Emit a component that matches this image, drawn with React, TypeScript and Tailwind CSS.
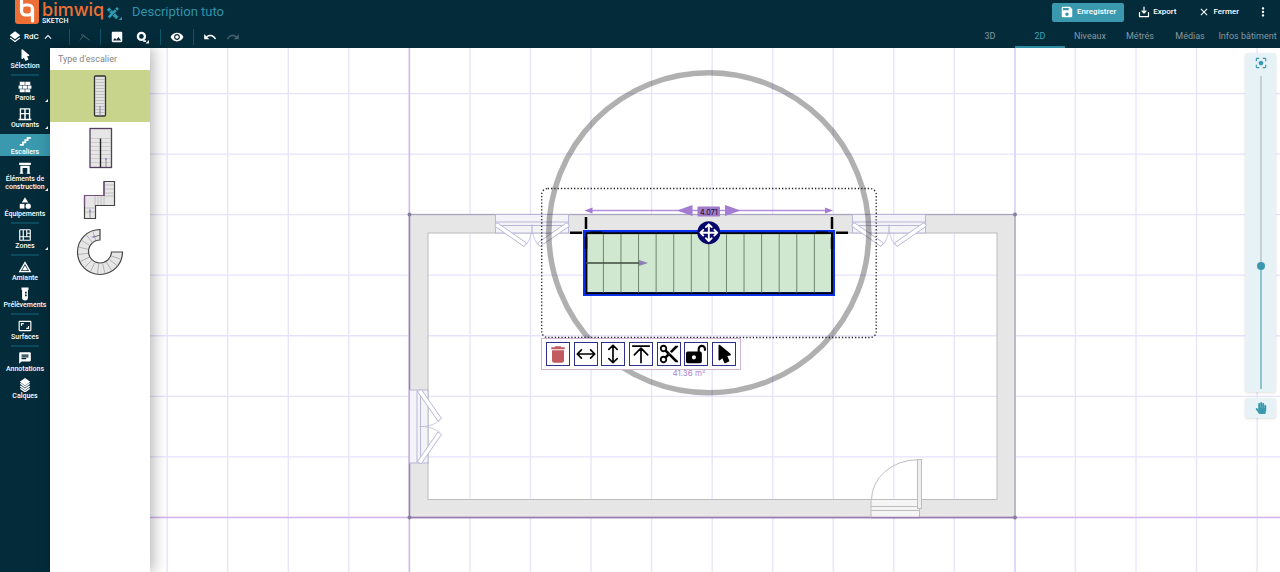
import type { ReactNode } from "react";
import {
  MdAspectRatio,
  MdCategory,
  MdCenterFocusStrong,
  MdChat,
  MdClose,
  MdContentCut,
  MdImage,
  MdKeyboardArrowUp,
  MdLayers,
  MdMoreVert,
  MdRedo,
  MdSave,
  MdUndo,
  MdVisibility,
} from "react-icons/md";
import { FaHandPaper } from "react-icons/fa";

const CURSOR =
  "M13.64,21.97C13.14,22.21 12.54,22 12.31,21.5L10.13,16.76L7.62,18.78C7.45,18.92 7.24,19 7,19A1,1 0 0,1 6,18V3A1,1 0 0,1 7,2C7.24,2 7.47,2.09 7.64,2.23L7.65,2.22L19.14,11.86C19.57,12.22 19.62,12.85 19.27,13.27C19.12,13.45 18.91,13.57 18.7,13.61L15.54,14.23L17.74,18.96C18,19.46 17.76,20.05 17.26,20.28L13.64,21.97Z";

function Glyph({ d, className = "size-3.5" }: { d: string; className?: string }) {
  return (
    <svg viewBox="0 0 24 24" className={className} fill="currentColor" fillRule="evenodd" aria-hidden="true">
      <path d={d} />
    </svg>
  );
}

function LineGlyph({ d, className = "size-5", width = 2 }: { d: string; className?: string; width?: number }) {
  return (
    <svg
      viewBox="0 0 24 24"
      className={className}
      fill="none"
      stroke="currentColor"
      strokeWidth={width}
      strokeLinecap="round"
      strokeLinejoin="round"
      aria-hidden="true"
    >
      <path d={d} />
    </svg>
  );
}

type Tool = { label: string; icon: ReactNode; menu?: boolean; active?: boolean };

const toolGroups: Tool[][] = [
  [{ label: "Sélection", icon: <Glyph d={CURSOR} /> }],
  [
    {
      label: "Parois",
      menu: true,
      icon: (
        <Glyph d="M3 3h8.500v5.500H3zM12.500 3H21v5.500h-8.500zM1 9.300h6.500v5.500H1zM8.300 9.300h7.500v5.500h-7.500zM16.700 9.300h6.300v5.500h-6.300zM3 15.700h8.500V21H3zM12.500 15.700H21V21h-8.500z" />
      ),
    },
    {
      label: "Ouvrants",
      menu: true,
      icon: <Glyph d="M3 2h18v18h2v2.500H1V20h2zM5.300 4.300v6h5.400v-6zM13.300 4.300v6h5.400v-6zM5.300 12.500V20h5.400v-7.500zM13.300 12.500V20h5.400v-7.500z" />,
    },
    {
      label: "Escaliers",
      active: true,
      icon: <Glyph d="M15,5V9H11V13H7V17H3V20H10V16H14V12H18V8H22V5H15Z" />,
    },
    {
      label: "Éléments de construction",
      menu: true,
      icon: <Glyph d="M2 3h20v4H2zM4 8h16v12h1v2h-6v-2h1v-8H8v8h1v2H3v-2h1z" />,
    },
    { label: "Équipements", icon: <MdCategory className="size-3.5" /> },
  ],
  [
    {
      label: "Zones",
      menu: true,
      icon: (
        <Glyph d="M4 2h16a2 2 0 0 1 2 2v16a2 2 0 0 1-2 2H4a2 2 0 0 1-2-2V4a2 2 0 0 1 2-2zM4 4v10h4V4zM10 4v10h4V4zM16 4v4h4V4zM16 10v4h4v-4zM4 16v4h4v-4zM10 16v4h10v-4z" />
      ),
    },
  ],
  [
    {
      label: "Amiante",
      icon: <Glyph d="M12 2L23 21H1zM12 7L5 19h14zM12 9.500l5 8H7z" />,
    },
    {
      label: "Prélèvements",
      icon: <Glyph d="M6 1h12v4h-1v14a5 4 0 0 1-10 0V5H6zM12 8v3h3V8zM12 13v3h3v-3z" />,
    },
  ],
  [{ label: "Surfaces", icon: <MdAspectRatio className="size-3.5" /> }],
  [
    { label: "Annotations", icon: <MdChat className="size-3.5" /> },
    {
      label: "Calques",
      icon: (
        <Glyph d="M12 0l9 6.500-9 6.500-9-6.500zM3 10l2-1.500 7 5 7-5 2 1.500-9 6.500zM3 14.500L5 13l7 5 7-5 2 1.500-9 6.500zM3 18.500L5 17l7 5 7-5 2 1.500L12 25z" />
      ),
    },
  ],
];

function Separator() {
  return <span className="h-4 w-px shrink-0 bg-[#0d5569]" />;
}

function TopBar() {
  const icon = "size-3.5";
  return (
    <header className="flex h-12 shrink-0 justify-between bg-[#042b3a] text-white">
      <div className="flex flex-col">
        <div className="flex h-6 items-center">
          <svg viewBox="0 0 24 24" className="ml-[15px] size-6 shrink-0" aria-hidden="true">
            <rect y="-3" width="24" height="27" rx="3" fill="#ee6f35" />
            <path d="M6.500 0V10" stroke="#fff" strokeWidth="3.200" />
            <rect x="6.500" y="5" width="11" height="10" rx="4" fill="none" stroke="#fff" strokeWidth="3.200" />
            <path d="M17.500 9V21" stroke="#fff" strokeWidth="3.200" strokeLinecap="round" />
          </svg>
          <div className="ml-[3px] flex w-[62px] flex-col">
            <span className="h-[17px] font-[Inter] text-[18px] leading-5 font-medium text-[#ee6f35]">bimwiq</span>
            <span className="h-[7px] text-[7px] leading-[8px] font-medium">SKETCH</span>
          </div>
          <button aria-label="Modifier" className="ml-0.5 text-[#2e9ab1]">
            <svg viewBox="0 0 24 24" className="size-4" fill="none" stroke="currentColor" aria-hidden="true">
              <path d="M3 7l14 14" strokeWidth="5" />
              <path d="M18 6L4 20" strokeWidth="4" />
              <path d="M13 7l4 4M5 12l3-3M10 17l3-3" stroke="#042b3a" strokeWidth="1.500" />
              <path d="M24 19v5h-5z" fill="currentColor" stroke="none" />
            </svg>
          </button>
          <h1 className="ml-2.5 text-[13px] leading-4 font-normal text-[#2e93aa]">Description tuto</h1>
        </div>
        <div className="flex h-6 items-center pt-0.5 pl-2">
          <button className="flex items-center text-[8px] font-medium">
            <MdLayers className={icon} />
            <span className="mx-0.5">RdC</span>
            <MdKeyboardArrowUp className={icon} />
          </button>
          <div className="flex items-center gap-[9px] pl-3.5">
            <Separator />
            <button aria-label="Polyligne" className="text-[#47616d]">
              <LineGlyph d="M2 18l7-9 5 4 7 5M5 8h4l3 5" className="size-3" />
            </button>
            <Separator />
            <button aria-label="Image">
              <MdImage className={icon} />
            </button>
            <button aria-label="Recherche" className="px-0.5">
              <svg viewBox="0 0 24 24" className={icon} fill="none" stroke="currentColor" aria-hidden="true">
                <circle cx="11" cy="11" r="6" strokeWidth="4" />
                <path d="M14 19h5" strokeWidth="3" />
                <path d="M24 17v6h-6z" fill="currentColor" stroke="none" />
              </svg>
            </button>
            <Separator />
            <button aria-label="Affichage">
              <MdVisibility className={icon} />
            </button>
            <Separator />
            <button aria-label="Annuler">
              <MdUndo className={icon} />
            </button>
            <button aria-label="Rétablir" className="text-[#47616d]">
              <MdRedo className={icon} />
            </button>
          </div>
        </div>
      </div>

      <div className="flex flex-col items-end">
        <div className="flex h-6 items-center text-[8px] font-medium">
          <button className="flex h-[19px] w-[72px] items-center justify-center gap-[3px] rounded-xs bg-[#3a99af]">
            <MdSave className={icon} />
            Enregistrer
          </button>
          <button className="ml-3.5 flex items-center gap-[3px]">
            <LineGlyph d="M12 2v12M8 10l4 4 4-4M3 13v8h18v-8" className="size-3" width={2.5} />
            Export
          </button>
          <button className="ml-[22px] flex items-center gap-[3px]">
            <MdClose className="size-3" />
            Fermer
          </button>
          <button aria-label="Plus" className="mr-2.5 ml-[17px]">
            <MdMoreVert className={icon} />
          </button>
        </div>
        <nav className="flex h-6 text-[9px] text-[#8499a2]">
          {["3D", "2D", "Niveaux", "Métrés", "Médias"].map((tab) => (
            <a
              key={tab}
              href={`#${tab}`}
              className={
                tab === "2D"
                  ? "flex w-[50px] items-center justify-center border-b-2 border-[#2e8ba1] pt-[3px] text-[#3aa3ba]"
                  : "flex w-[50px] items-center justify-center border-b-2 border-transparent pt-[3px]"
              }
            >
              {tab}
            </a>
          ))}
          <a
            href="#infos"
            className="flex w-[65px] items-center justify-center border-b-2 border-transparent pt-[3px] whitespace-nowrap"
          >
            Infos bâtiment
          </a>
        </nav>
      </div>
    </header>
  );
}

function Sidebar() {
  return (
    <nav className="flex w-[50px] shrink-0 flex-col bg-[#042b3a] text-white">
      {toolGroups.map((group, index) => (
        <div key={group[0].label} className="flex flex-col">
          {index > 0 && <hr className="mx-[11px] my-1 h-0.5 border-0 bg-[#0b4a5c]" />}
          <div className="flex flex-col gap-[5px]">
            {group.map((tool) => (
              <button
                key={tool.label}
                className={
                  tool.active
                    ? "relative flex flex-col items-center bg-[#3a99af] text-[7px] leading-2 font-medium"
                    : "relative flex flex-col items-center text-[7px] leading-2 font-medium"
                }
              >
                {tool.icon}
                {tool.label}
                {tool.menu && (
                  <svg viewBox="0 0 4 4" className="absolute right-0.5 bottom-0 size-[3px]" fill="currentColor" aria-hidden="true">
                    <path d="M4 0v4H0z" />
                  </svg>
                )}
              </button>
            ))}
          </div>
        </div>
      ))}
    </nav>
  );
}

const spiralTreads = Array.from({ length: 13 }, (_, i) => {
  const a = ((i + 1) * 270 * Math.PI) / (14 * 180);
  return { x: -Math.sin(a), y: -Math.cos(a) };
});

const stairTypes = [
  {
    name: "Escalier droit",
    drawing: (
      <>
        <rect x="19.500" y="6" width="11" height="40" rx="1" fill="#e3e3e3" stroke="#333" strokeWidth="1.300" />
        <path d="M20 9.500h10m-10 3h10m-10 3h10m-10 3h10m-10 3h10m-10 3h10m-10 3h10m-10 3h10m-10 3h10m-10 3h10m-10 3h10m-10 3h10" stroke="#b5b5b5" strokeWidth=".8" />
        <path d="M25 46V36" stroke="#8e80a8" />
      </>
    ),
  },
  {
    name: "Escalier en U",
    drawing: (
      <>
        <rect x="14.500" y="6.500" width="21.500" height="39" transform="translate(.5 0)" fill="#e6e6e6" stroke="#54405c" strokeWidth="1.300" />
        <path d="M16 16.500h20M16 20.500h20m-20 4h20m-20 4h20m-20 4h20m-20 4h20m-20 4h20" stroke="#c4c4c4" strokeWidth=".8" />
        <path d="M25.500 16.500V45.500" stroke="#222" strokeWidth="1.400" />
        <path d="M31 45V36" stroke="#777" strokeWidth=".8" />
        <path d="M31 35l-1 3h2z" fill="#a080d0" />
      </>
    ),
  },
  {
    name: "Escalier en Z",
    drawing: (
      <>
        <path d="M9.500 21.500H29v-14h10.500v24h-19v13h-11z" transform="translate(25 0) translate(-25 0)" fill="#e6e6e6" stroke="#444" strokeWidth="1.200" />
        <path d="M9.500 32V21.500H29v-14" fill="none" stroke="#765080" strokeWidth="1.200" />
        <path d="M30 11h9m-9 4h9m-9 4h9m-9 3h9M29 22v9m-3-9v9m-3-9v9m-3-9v9M10 34h10m-10 4h10" stroke="#b5b5b5" strokeWidth=".8" />
        <path d="M15 44v-8" stroke="#777" strokeWidth=".8" />
        <path d="M15 34.500l-1.200 3h2.400z" fill="#a080d0" />
      </>
    ),
  },
  {
    name: "Escalier circulaire",
    drawing: (
      <>
        <path d="M25 3.500A22.500 22.500 0 1 0 47.500 26H36.500A11.500 11.500 0 1 1 25 14z" fill="#e6e6e6" stroke="#444" strokeWidth="1.200" />
        {spiralTreads.map((t, i) => (
          <path
            key={i}
            d={`M${25 + t.x * 12} ${26 + t.y * 12}L${25 + t.x * 22} ${26 + t.y * 22}`}
            stroke="#999"
            strokeWidth=".7"
          />
        ))}
        <path d="M25 9l-6 2" stroke="#555" strokeWidth=".8" />
        <path d="M16 11l3.500-1.500v2.500z" fill="#a080d0" />
      </>
    ),
  },
];

function StairPanel() {
  return (
    <aside className="z-10 flex w-[100px] shrink-0 flex-col bg-white shadow-[3px_0_14px_rgba(0,0,0,0.3)]">
      <h2 className="h-[22px] pl-2 text-[9px] leading-[22px] font-normal text-[#858585]">Type d'escalier</h2>
      {stairTypes.map((type, index) => (
        <button
          key={type.name}
          aria-label={type.name}
          className={index === 0 ? "flex h-[52px] items-center justify-center bg-[#c8d38b]" : "flex h-[52px] items-center justify-center"}
        >
          <svg viewBox="0 0 50 52" className="h-[52px] w-[50px]" fill="none" aria-hidden="true">
            {type.drawing}
          </svg>
        </button>
      ))}
    </aside>
  );
}

/* Double-leaf window, drawn from its top-left corner with the outer wall face on top. */
function WindowSymbol({ transform }: { transform: string }) {
  return (
    <g transform={transform} stroke="#b9b7d8" fill="none">
      <rect width="73" height="18.500" fill="#f4f4f8" />
      <path d="M0 7.500H73M0 11H73" />
      <path d="M1.500 8L31 28.500L28.500 32L-1 11.500z" fill="#fff" />
      <path d="M71.500 8L42 28.500L44.500 32L74 11.500z" fill="#fff" />
      <path d="M36.500 10Q37 21 31 30M36.500 10Q36 21 42 30" strokeWidth=".7" />
    </g>
  );
}

const STEP = 60.55;
const columns = Array.from({ length: 40 }, (_, i) => 409.4 + (i - 6) * STEP);
const rows = Array.from({ length: 24 }, (_, i) => 517.4 + (i - 8) * STEP);
const treads = Array.from({ length: 13 }, (_, i) => 603.4 + i * 17.58);

function Plan() {
  return (
    <svg className="absolute inset-0 size-full" aria-label="Plan 2D">
      <g transform="translate(-50 -48)" fill="none">
        <g stroke="#e5e3fc" strokeWidth="1.300">
          {columns.map((x) => (
            <path key={x} d={`M${x} 0V1600`} />
          ))}
          {rows.map((y) => (
            <path key={y} d={`M0 ${y}H2400`} />
          ))}
        </g>
        <path d="M1015 0V1600" stroke="#dcdafc" strokeWidth="2" />
        <path d="M409.400 0V1600M0 517.400H2400" stroke="#d3b5f0" strokeWidth="1.500" />

        <path d="M409.500 214.500H1015V517.500H409.500zM428 233V499.500H997V233z" fill="#e6e6e6" fillRule="evenodd" />
        <rect x="428" y="233" width="569" height="266.500" stroke="#bcbcbc" />
        <rect x="409.500" y="214.500" width="605.500" height="303" stroke="#a9a4bf" strokeWidth="1.300" />
        <path d="M409.500 214.500V517.500H1015" stroke="#987cae" strokeWidth="1.300" />
        <g fill="#85809a">
          <circle cx="409.500" cy="214.500" r="2" />
          <circle cx="1015" cy="214.500" r="2" />
          <circle cx="409.500" cy="517.500" r="2" />
          <circle cx="1015" cy="517.500" r="2" />
        </g>

        <WindowSymbol transform="translate(495.500 214.500)" />
        <WindowSymbol transform="translate(852.500 214.500)" />
        <WindowSymbol transform="matrix(0 1 1 0 409.500 390)" />

        <g stroke="#bdbdbd">
          <rect x="871" y="499.500" width="48.500" height="18" fill="#f5f5f5" />
          <path d="M871 506.500H919M871 510.500H919" />
          <path d="M871.500 499.500A46 40 0 0 1 917.500 459.800" />
          <rect x="917.500" y="459.500" width="4" height="49" fill="#eee" />
        </g>
        <path d="M871 517.500H920" stroke="#987cae" strokeWidth="1.300" />

        <text x="689" y="376" textAnchor="middle" className="fill-[#a987d2] font-[Inter] text-[8px]">
          41.36 m²
        </text>

        <circle cx="708.800" cy="232.700" r="160" stroke="#000" strokeOpacity=".31" strokeWidth="5.500" />
        <rect x="541.700" y="188.500" width="334.500" height="149" rx="6" stroke="#222" strokeWidth="1.300" strokeDasharray="1.300 2" />

        <rect x="585" y="232" width="248" height="62" fill="#cfe8cf" stroke="#0a32ee" strokeWidth="4" />
        <rect x="586.500" y="233.200" width="245.500" height="60" stroke="#000" strokeWidth="1.800" />
        <g stroke="#6f856f">
          {treads.map((x) => (
            <path key={x} d={`M${x} 234V292.500`} />
          ))}
        </g>
        <path d="M586 263H640" stroke="#3c4a3c" strokeWidth="1.500" />
        <path d="M648 263l-9-3v6z" fill="#8d80b5" />

        <path d="M586 217V229M832 217V229M586 237V249M832 237V249" stroke="#000" strokeWidth="2.500" />
        <path d="M570 232.700H582M590 232.700H602M816 232.700H828M836 232.700H848" stroke="#000" strokeWidth="2.500" />

        <path d="M588 210.500H830" stroke="#b591dc" strokeWidth="1.300" />
        <path
          d="M584.500 210.500l8-3v6zM833 210.500l-8-3v6zM677 210.500l15.500-5.500v11zM740.500 210.500L725 205v11z"
          fill="#a47bd2"
        />
        <rect x="697.500" y="206.500" width="22.500" height="10" rx="1" fill="#a07bcd" />
        <text x="708.800" y="214.500" textAnchor="middle" className="fill-[#1f1230] font-[Inter] text-[7px] font-medium">
          4.071
        </text>

        <circle cx="708.800" cy="232.700" r="11.500" fill="#06066b" />
        <path
          d="M700.800 232.700h16M708.800 224.700v16M703.300 229.800l-2.900 2.900 2.900 2.900M714.300 229.800l2.900 2.900-2.900 2.900M705.900 227.200l2.900-2.900 2.900 2.900M705.900 238.200l2.900 2.900 2.900-2.900"
          stroke="#fff"
          strokeWidth="1.900"
          strokeLinecap="round"
          strokeLinejoin="round"
        />
      </g>
    </svg>
  );
}

const selectionActions = [
  {
    name: "Supprimer",
    icon: (
      <span className="text-[#c25b60]">
        <Glyph d="M8.500 1.500h7l1 1.500H21v2.500H3V3h4.500zM4 7h16v13.500a3 3 0 0 1-3 3H7a3 3 0 0 1-3-3z" className="size-[18px]" />
      </span>
    ),
  },
  { name: "Retourner horizontalement", icon: <LineGlyph d="M1.500 12h21M6.500 7l-5 5 5 5M17.500 7l5 5-5 5" /> },
  { name: "Retourner verticalement", icon: <LineGlyph d="M12 1.500v21M7 6.500l5-5 5 5M7 17.500l5 5 5-5" /> },
  { name: "Aligner", icon: <LineGlyph d="M2 2.500h20M12 22.500V5M4 13l8-8 8 8" /> },
  { name: "Couper", icon: <MdContentCut className="size-[22px]" /> },
  {
    name: "Déverrouiller",
    icon: (
      <Glyph
        d="M4 9h10V6a5 5 0 0 1 10 0v2h-2.500V6a2.500 2.500 0 0 0-5 0v3H17a2 2 0 0 1 2 2v10a2 2 0 0 1-2 2H2a2 2 0 0 1-2-2V11a2 2 0 0 1 2-2zM9.500 13.500a2.500 2.500 0 1 0 0 5a2.500 2.500 0 0 0 0-5z"
        className="size-5"
      />
    ),
  },
  { name: "Sélectionner", icon: <Glyph d={CURSOR} className="size-[22px]" /> },
];

function SelectionToolbar() {
  return (
    <div className="absolute top-[290px] left-[491px] flex w-[200px] items-center justify-between border border-[#d3b3d6] bg-white px-1 py-[3px]">
      {selectionActions.map((action) => (
        <button
          key={action.name}
          aria-label={action.name}
          className="flex size-6 items-center justify-center border border-[#30308c] text-black"
        >
          {action.icon}
        </button>
      ))}
    </div>
  );
}

function ZoomControls() {
  return (
    <div className="absolute top-[5px] right-1 flex w-[31px] flex-col gap-1.5 text-[#3a99af]">
      <div className="flex flex-col items-center rounded-xs bg-[#e6f2f6] py-[3px] shadow-sm">
        <button aria-label="Recentrer">
          <MdCenterFocusStrong className="size-3.5" />
        </button>
        <input
          type="range"
          aria-label="Zoom"
          min="0"
          max="100"
          defaultValue="39"
          className="mt-1.5 h-[313px] w-2 appearance-none bg-[linear-gradient(to_top,#8cc5d0_39%,#c5d0d2_39%)] bg-[length:2px_100%] bg-center bg-no-repeat [direction:rtl] [writing-mode:vertical-lr] [&::-webkit-slider-thumb]:size-2 [&::-webkit-slider-thumb]:appearance-none [&::-webkit-slider-thumb]:rounded-full [&::-webkit-slider-thumb]:bg-[#3a99af]"
        />
      </div>
      <button aria-label="Déplacer la vue" className="flex h-5 items-center justify-center rounded-xs bg-[#e6f2f6] shadow-sm">
        <FaHandPaper className="size-3" />
      </button>
    </div>
  );
}

export default function App() {
  return (
    <div className="flex min-h-screen flex-col overflow-hidden bg-white font-[Roboto,sans-serif]">
      <TopBar />
      <div className="flex grow">
        <Sidebar />
        <div className="relative flex grow">
          <Plan />
          <StairPanel />
          <SelectionToolbar />
          <ZoomControls />
        </div>
      </div>
    </div>
  );
}
